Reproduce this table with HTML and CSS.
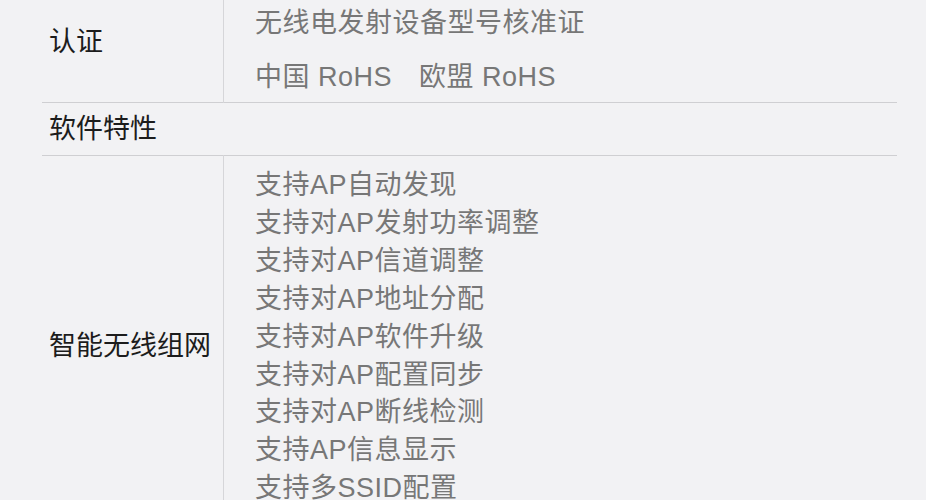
FILE: index.html
```html
<!DOCTYPE html>
<html lang="zh-CN">
<head>
  <meta charset="UTF-8" />
  <meta name="viewport" content="width=device-width, initial-scale=1.0" />
  <title>规格参数</title>
  <link rel="stylesheet" href="styles.css">
</head>
<body>
  <table class="spec">
    <tr class="cert">
      <td class="label">认证</td>
      <td class="value">
        <p>无线电发射设备型号核准证</p>
        <p><span class="rohs">中国 RoHS</span><span>欧盟 RoHS</span></p>
      </td>
    </tr>
    <tr class="group">
      <td colspan="2">软件特性</td>
    </tr>
    <tr class="feature">
      <td class="label">智能无线组网</td>
      <td class="value">
        <ul>
          <li>支持AP自动发现</li>
          <li>支持对AP发射功率调整</li>
          <li>支持对AP信道调整</li>
          <li>支持对AP地址分配</li>
          <li>支持对AP软件升级</li>
          <li>支持对AP配置同步</li>
          <li>支持对AP断线检测</li>
          <li>支持AP信息显示</li>
          <li>支持多SSID配置</li>
        </ul>
      </td>
    </tr>
  </table>
</body>
</html>
```

FILE: styles.css
```css
body {
  background: #f2f2f4;
  margin: 0;
  font-family: "Liberation Sans", "Noto Sans CJK SC", sans-serif;
  font-size: 27px;
  color: #1c1c1c;
}
.spec {
  border-collapse: collapse;
  width: 855px;
  margin: -19px 0 0 42px;
}
.spec td {
  padding: 0;
  vertical-align: middle;
}
.spec tr {
  border-bottom: 1px solid #cfcfd2;
}
.label {
  width: 174px;
  padding-left: 7px !important;
  border-right: 1px solid #d6d6d9;
  line-height: 38px;
}
.value {
  color: #777;
  letter-spacing: 0.5px;
  padding-left: 31px !important;
}
.value p {
  margin: 0;
  line-height: 38px;
}
.cert .value {
  padding-top: 23px !important;
  padding-bottom: 6px !important;
}
.cert .value p + p {
  margin-top: 16px;
}
.rohs {
  margin-right: 27px;
}
.group td {
  padding: 7px 0 7px 7px;
  line-height: 38px;
}
.feature .value {
  padding-top: 11px !important;
  padding-bottom: 28px !important;
}
ul {
  list-style: none;
  margin: 0;
  padding: 0;
}
li {
  line-height: 37.9px;
}
```
